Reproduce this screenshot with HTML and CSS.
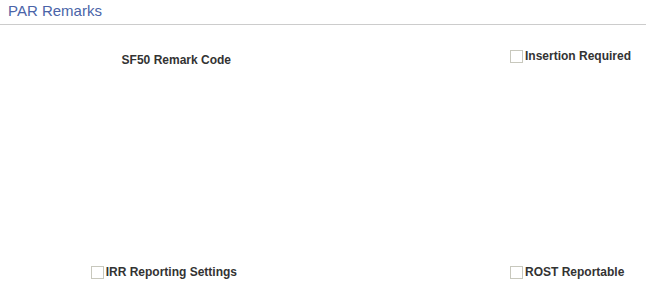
FILE: index.html
```html
<!DOCTYPE html>
<html lang="en">
  <head>
    <meta charset="UTF-8" />
    <title>PAR Remarks</title>
    <link rel="stylesheet" href="styles.css">
  </head>
  <body>
    <div class="panel">
      <div class="panel-title">PAR Remarks</div>
      <div class="form">
        <div class="field left first">
          <label class="label">SF50 Remark Code</label>
        </div>
        <div class="field right">
          <label class="check"><input type="checkbox" /> Insertion Required</label>
        </div>
        <div class="field left second">
          <label class="check"><input type="checkbox" /> IRR Reporting Settings</label>
        </div>
        <div class="field right">
          <label class="check"><input type="checkbox" /> ROST Reportable</label>
        </div>
      </div>
    </div>
  </body>
</html>
```

FILE: styles.css
```css
body {
  margin: 0;
  font-family: "Liberation Sans", Arial, sans-serif;
  background-color: #fff;
  color: #333;
}
.panel-title {
  font-size: 15px;
  line-height: 17px;
  color: #4a64a8;
  padding: 2px 8px 5px;
  border-bottom: 1px solid #ccc;
}
.form {
  display: grid;
  grid-template-columns: 510px 1fr;
  grid-template-rows: 216px 20px;
  padding-top: 21px;
}
.field {
  display: flex;
  align-items: center;
  height: 20px;
  font-size: 12px;
  font-weight: bold;
}
.field.left {
  justify-content: flex-end;
}
.field.first {
  padding-right: 279px;
  margin-top: 4px;
}
.field.second {
  padding-right: 273px;
}
.check {
  display: flex;
  align-items: center;
  gap: 2px;
}
.check input {
  appearance: none;
  margin: 0;
  width: 13px;
  height: 13px;
  border: 1px solid #c8c8bd;
  background-color: #fff;
}
```
